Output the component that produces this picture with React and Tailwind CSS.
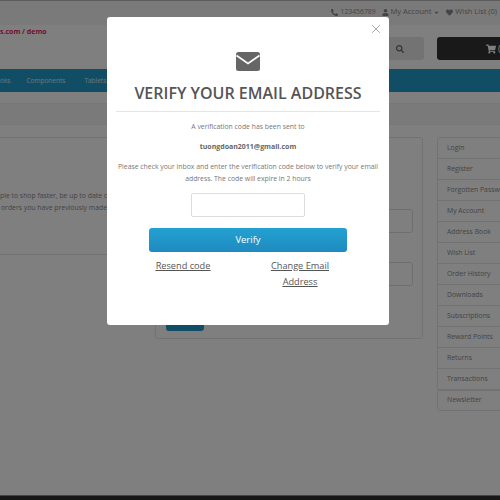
import React from "react";
import { FaPhoneAlt, FaUser, FaCaretDown, FaHeart, FaSearch, FaShoppingCart } from "react-icons/fa";
import { X } from "lucide-react";

const links = ["Login", "Register", "Forgotten Password", "My Account", "Address Book", "Wish List", "Order History", "Downloads", "Subscriptions", "Reward Points", "Returns", "Transactions"];

function Backdrop() {
    return (
        <div className="w-[500px] h-[500px] overflow-hidden flex flex-col bg-white text-[#888] font-['Open_Sans',sans-serif]">
            <div className="h-[25px] shrink-0 pb-[2px] bg-[#f5f5f5] border-t border-[#bbb] border-b-[#e8e8e8] flex items-center justify-end gap-[6px] pr-[3px] text-[7.5px] text-[#888] whitespace-nowrap overflow-hidden">
                <span className="flex items-center gap-[3px] text-[6.8px]"><FaPhoneAlt className="w-[7px] h-[7px]" />123456789</span>
                <span className="flex items-center gap-[2px]"><FaUser className="w-[7px] h-[7px]" />My Account<FaCaretDown className="w-[7px] h-[7px]" /></span>
                <span className="flex items-center gap-[2px]"><FaHeart className="w-[7px] h-[7px]" />Wish List (0)</span>
            </div>
            <div className="h-[44px] shrink-0 flex justify-between">
                <p className="mt-[2px] text-[7px] font-bold text-[#e0245e] leading-[10px]">s.com / demo</p>
                <div className="flex gap-[13px] mt-[12px] h-[23px]">
                    <div className="w-[44px] pr-[5px] rounded-[3px] bg-[#e6e6e6] flex items-center justify-center text-[#666]"><FaSearch className="w-[8px] h-[8px]" /></div>
                    <div className="w-[63px] pl-[49px] rounded-l-[3px] bg-[#333] flex items-center overflow-hidden whitespace-nowrap text-white text-[9px]"><FaShoppingCart className="w-[10px] h-[10px] mr-[2px] shrink-0" />(0) item</div>
                </div>
            </div>
            <div className="h-[23px] shrink-0 bg-[#229ac8] flex items-center text-[6.5px] font-medium text-white/80 whitespace-nowrap">
                <span>oks</span>
                <span className="ml-[16px]">Components</span>
                <span className="ml-[19px]">Tablets</span>
            </div>
            <div className="h-[11px] shrink-0" />
            <div className="h-[22px] shrink-0 bg-[#f5f5f5] border-y border-[#eee]" />
            <div className="flex mt-[12px]">
                <div className="w-[155px] shrink-0 overflow-hidden">
                    <div className="w-[150px] h-[117px] border-t border-[#e5e5e5] pt-[52px] text-[6.85px] leading-[12px] whitespace-nowrap text-[#888]">
                        <p>ple to shop faster, be up to date on your order</p>
                        <p className="pl-[1px]">orders you have previously made</p>
                    </div>
                    <div className="w-[150px] border-t border-[#e5e5e5]" />
                </div>
                <div className="w-[268px] h-[202px] shrink-0 border border-[#e5e5e5] rounded-[3px] pl-[10px] pr-[9px] pt-[71px]">
                    <div className="h-[24px] border border-[#ddd] rounded-[3px]" />
                    <div className="h-[24px] mt-[29px] border border-[#ddd] rounded-[3px]" />
                    <div className="w-[38px] h-[25px] mt-[20px] rounded-[3px] bg-[#229ac8]" />
                </div>
                <div className="ml-[14px] w-[100px] shrink-0 overflow-hidden">
                    <div className="border border-[#e5e5e5] rounded-[3px]">
                        {links.map((label) => (
                            <div key={label} className="h-[21px] pl-[9px] flex items-center border-b border-[#e5e5e5] text-[6.85px] whitespace-nowrap">{label}</div>
                        ))}
                    </div>
                    <div className="h-[21px] -mt-[1px] pl-[9px] flex items-center border border-[#e5e5e5] rounded-[3px] text-[6.85px]">Newsletter</div>
                </div>
            </div>
            <div className="mt-auto h-[5px] bg-[#303030] border-t border-[#888]" />
        </div>
    );
}

export default function App() {
    return (
        <div className="relative w-[500px] h-[500px] overflow-hidden">
            <Backdrop />
            <div className="absolute inset-0 bg-black/50">
                <div className="relative ml-[107px] mt-[17px] w-[282px] h-[308px] bg-white rounded-[3px] font-['Open_Sans',sans-serif] text-[#555] flex flex-col items-center">
                    <X className="absolute top-[5px] right-[6px] w-[14px] h-[14px] text-[#888]" strokeWidth={1.25} />
                    <svg className="mt-[35px]" width="24" height="19" viewBox="0 0 24 19">
                        <rect width="24" height="19" rx="2.5" fill="#666" />
                        <path d="M0.5 3.5l11.5 8 11.5-8" fill="none" stroke="#fff" strokeWidth="1.6" />
                    </svg>
                    <h1 className="mt-[10px] text-[16px] leading-[24px] font-semibold text-[#555] whitespace-nowrap">VERIFY YOUR EMAIL ADDRESS</h1>
                    <div className="w-[264px] mt-[6px] border-t border-[#e5e5e5]" />
                    <p className="mt-[9px] text-[6.85px] leading-[12px] text-[#777]">A verification code has been sent to</p>
                    <p className="mt-[8px] text-[7px] leading-[12px] font-bold text-[#666]">tuongdoan2011@gmail.com</p>
                    <p className="mt-[8px] w-[264px] text-center text-[6.85px] leading-[12px] text-[#777]">Please check your inbox and enter the verification code below to verify your email address. The code will expire in 2 hours</p>
                    <input className="mt-[8px] w-[114px] h-[24px] border border-[#ddd] rounded-[2px] bg-white" />
                    <button className="mt-[11px] w-[198px] h-[24px] rounded-[3px] bg-gradient-to-b from-[#23a1d1] to-[#1f8ac0] text-white text-[9.5px] font-medium">Verify</button>
                    <div className="mt-[6px] w-[198px] flex text-[9.2px] leading-[16px] text-[#555] underline text-center">
                        <a className="w-[68px] whitespace-nowrap">Resend code</a>
                        <a className="w-[70px] ml-[48px]">Change Email Address</a>
                    </div>
                </div>
            </div>
        </div>
    );
}
